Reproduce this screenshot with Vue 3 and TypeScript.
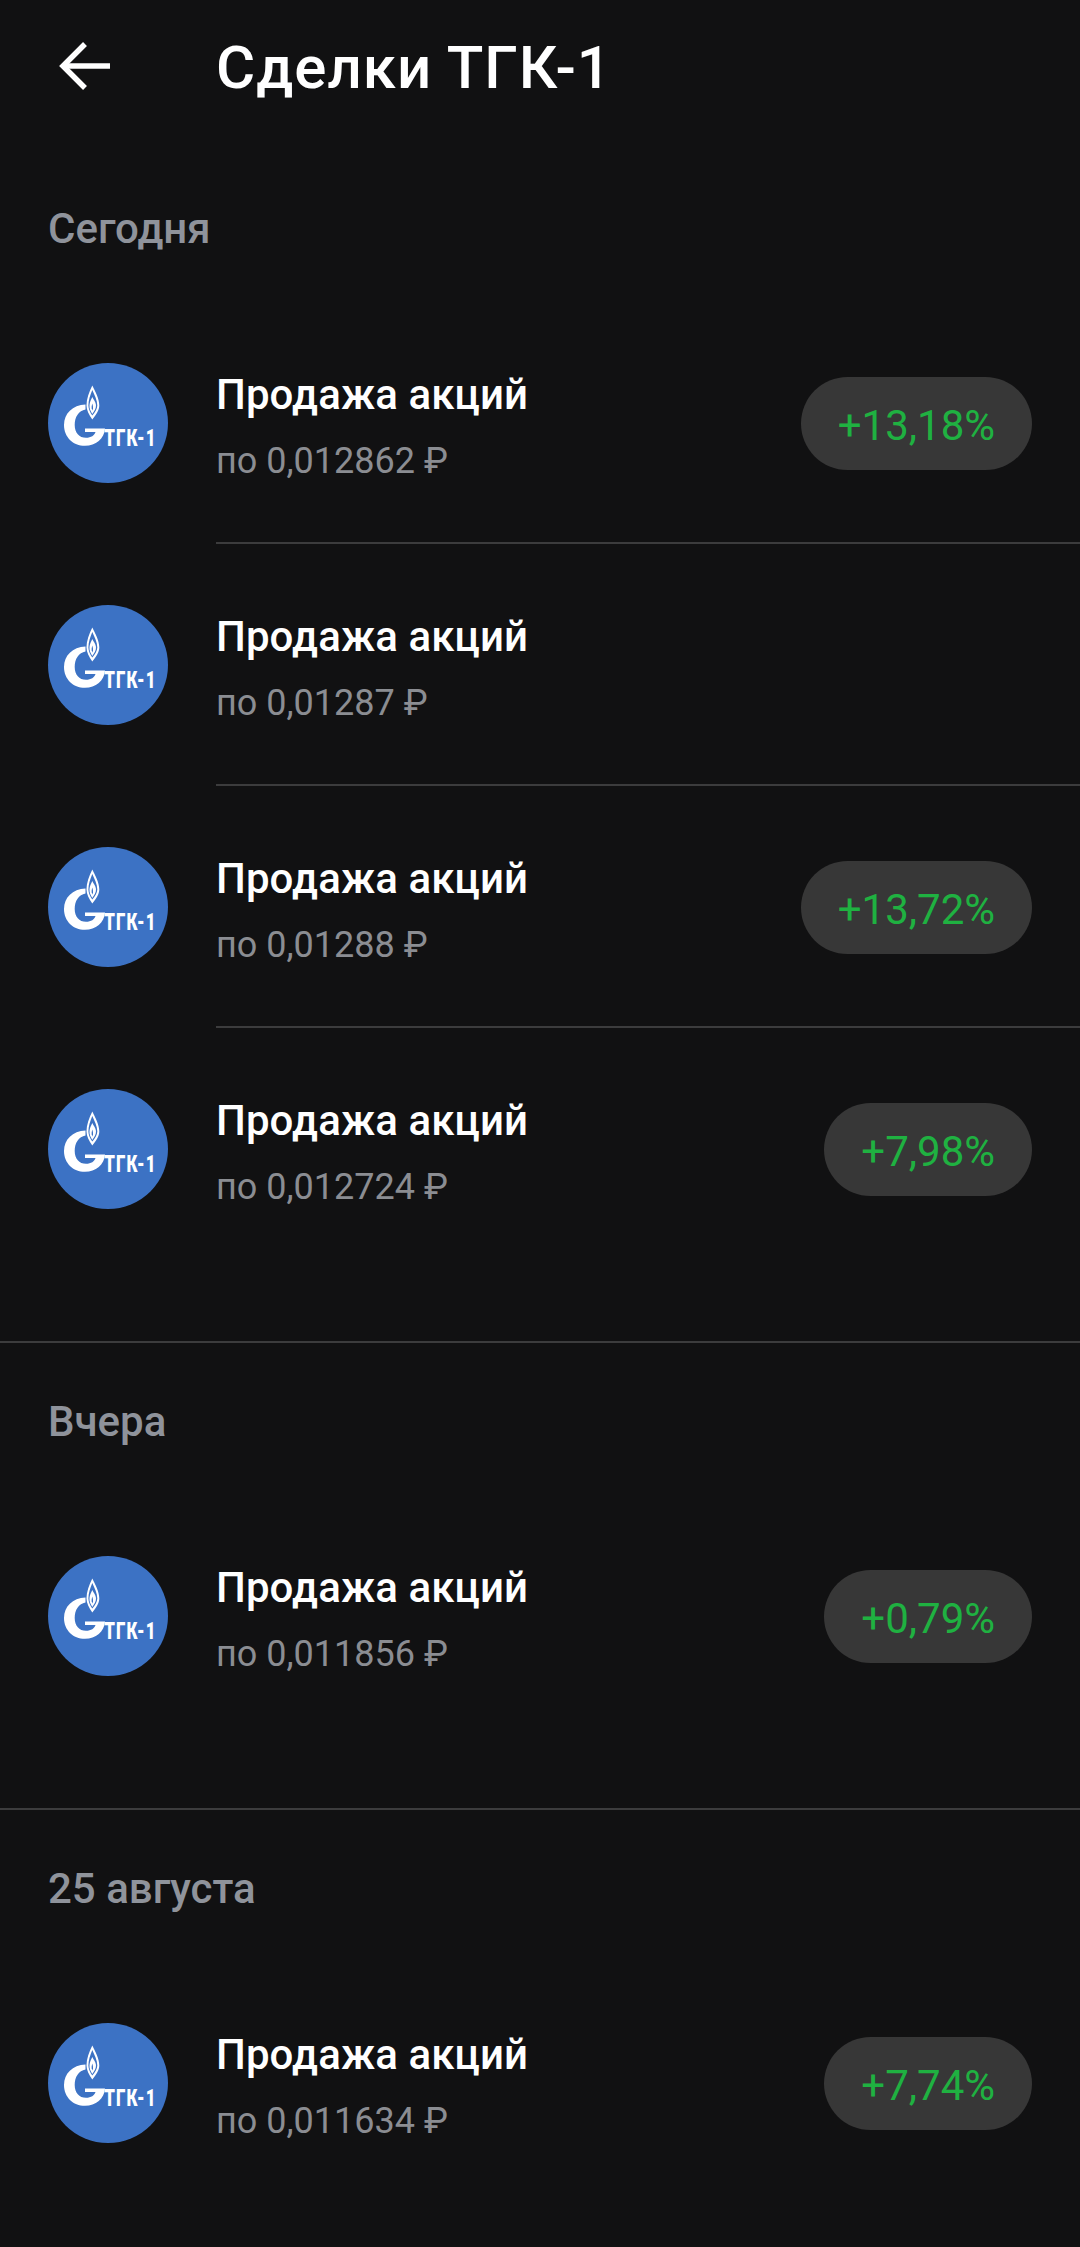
<template>
  <div class="page">
    <header class="top-bar">
      <button class="back-btn" aria-label="Назад">
        <svg width="52" height="48" viewBox="0 0 52 48" fill="none" stroke="#fff" stroke-width="5.500">
          <path d="M51 24H4" />
          <path d="M26 2 4 24l22 22" />
        </svg>
      </button>
      <h1 class="title">Сделки ТГК-1</h1>
    </header>

    <section v-for="group in groups" :key="group.label" class="group">
      <h2 class="group-label">{{ group.label }}</h2>
      <div v-for="(deal, i) in group.deals" :key="i" class="deal">
        <svg class="logo" viewBox="0 0 120 120">
          <circle cx="60" cy="60" r="60" fill="#3c72c4" />
          <!-- flame -->
          <path fill="#fff" d="M44.300 22.500C41 29 38.500 36 38.500 42.500c0 5 2.500 9 5.800 14 3.800-5 7-9 7-14 0-6.500-3.700-13.500-7-20Z" />
          <path fill="#3c72c4" d="M44.300 27C42.300 32 40.400 37 40.400 42.500c0 3.500 1.800 7 3.900 10 2.500-3 5-6.500 5-10 0-5.500-2.900-10.500-5-15.500Z" />
          <path fill="#fff" d="M44.300 34c-1.200 2.500-2.500 5-2.800 8-.3 3.500 1 6 2.800 9 2-3 3.900-5.500 3.700-9-.3-3-2.500-5.500-3.700-8Z" />
          <path fill="#3c72c4" d="M44.300 40.500c-.6 2-.8 3.500-.6 5l.6 2 .7-2c.1-1.500-.1-3-.7-5Z" />
          <!-- G -->
          <path
            fill="#fff"
            d="M37.500 41.500C24.500 42 16 50.500 16 62c0 12 9 20.800 21 20.800 10.800 0 19.300-7 20-17.300H37v3.500h10.500c-1 3.300-4.300 5.800-9.500 5.800-6.800 0-11.300-5-11.300-12.800 0-8 4-14.500 10.800-15.500Z"
          />
          <text class="logo-text" transform="translate(56.300 83) scale(.72 1.020)">ТГК-1</text>
        </svg>
        <div class="deal-body" :class="{ divided: i < group.deals.length - 1 }">
          <div class="deal-info">
            <div class="deal-name">Продажа акций</div>
            <div class="deal-price">по {{ deal.price }} ₽</div>
          </div>
          <div v-if="deal.gain" class="gain">{{ deal.gain }}</div>
        </div>
      </div>
    </section>
  </div>
</template>

<script setup lang="ts">
interface Deal {
  price: string
  gain?: string
}

interface Group {
  label: string
  deals: Deal[]
}

const groups: Group[] = [
  {
    label: 'Сегодня',
    deals: [
      { price: '0,012862', gain: '+13,18%' },
      { price: '0,01287' },
      { price: '0,01288', gain: '+13,72%' },
      { price: '0,012724', gain: '+7,98%' }
    ]
  },
  {
    label: 'Вчера',
    deals: [{ price: '0,011856', gain: '+0,79%' }]
  },
  {
    label: '25 августа',
    deals: [{ price: '0,011634', gain: '+7,74%' }]
  }
]
</script>

<style>
html,
body {
  background: #111112;
}
</style>

<style scoped>
.page {
  height: 2247px;
  overflow: hidden;
  background: #111112;
  font-family: Roboto, 'Noto Sans', sans-serif;
  color: #fff;
}

.top-bar {
  display: flex;
  align-items: center;
  height: 132px;
  margin-bottom: 18px;
}

.back-btn {
  display: flex;
  width: 216px;
  padding: 0 0 0 59px;
  border: none;
  background: none;
}

.title {
  margin: 0;
  padding-top: 3px;
  font-size: 60px;
  font-weight: 500;
  line-height: 66px;
  letter-spacing: 1px;
}

.group {
  padding: 51px 0 71px;
  border-bottom: 2px solid #3c3c3d;
}

.group-label {
  margin: 0 0 45px 48px;
  font-size: 42px;
  font-weight: 500;
  line-height: 56px;
  color: #8f939b;
}

.deal {
  display: flex;
  align-items: center;
}

.logo {
  flex: none;
  width: 120px;
  height: 120px;
  margin: 0 48px;
}

.logo-text {
  font-family: Roboto, sans-serif;
  font-size: 23.5px;
  font-weight: 900;
  letter-spacing: 1.4px;
  fill: #fff;
}

.deal-body {
  flex: 1;
  display: flex;
  align-items: center;
  justify-content: space-between;
  height: 242px;
  padding-right: 48px;
}

.deal-body.divided {
  box-shadow: inset 0 -2px 0 #3c3c3d;
}

.deal-info {
  padding-top: 10px;
}

.deal-name {
  font-size: 42px;
  font-weight: 500;
  line-height: 52px;
  letter-spacing: 0.1px;
}

.deal-price {
  margin-top: 14px;
  font-size: 36px;
  line-height: 52px;
  color: #8b8d92;
}

.gain {
  height: 93px;
  padding: 0 37px;
  border-radius: 47px;
  background: #373737;
  font-size: 42px;
  line-height: 97px;
  color: #1fb141;
}
</style>
